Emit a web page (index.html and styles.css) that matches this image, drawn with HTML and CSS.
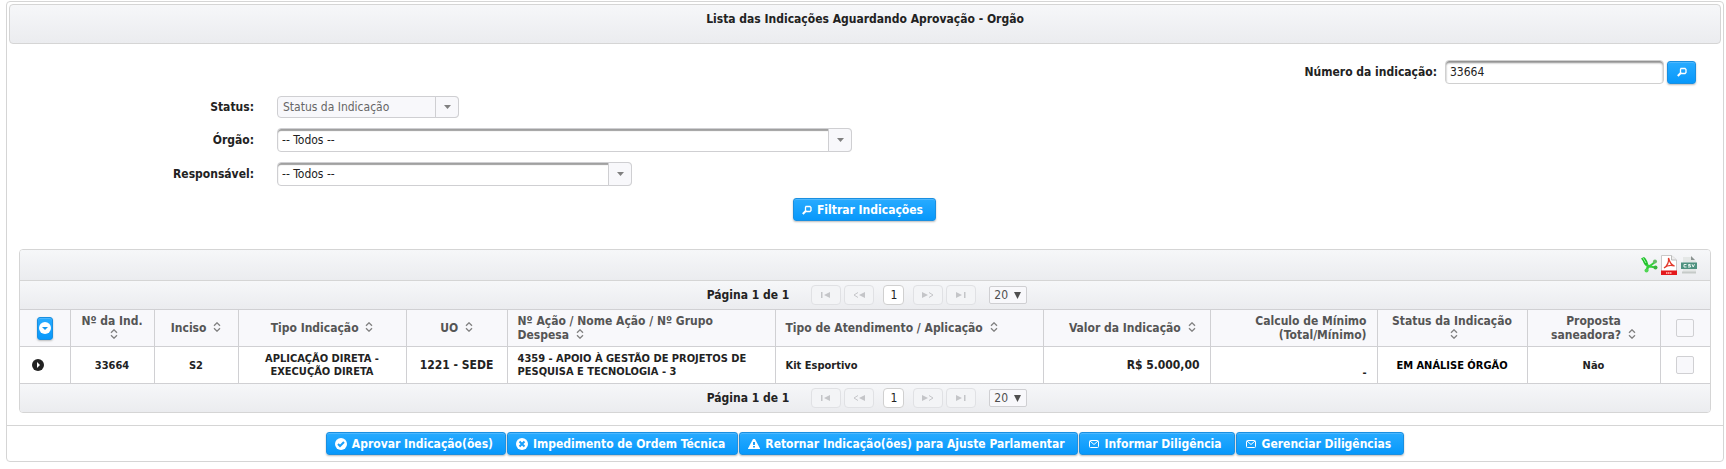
FILE: index.html
```
<!DOCTYPE html>
<html lang="pt-BR">
<head>
<meta charset="utf-8">
<title>Lista das Indicações</title>
<link rel="stylesheet" href="styles.css">
</head>
<body>
<svg class="defs" aria-hidden="true">
  <symbol id="search" viewBox="0 0 10 10"><path d="M4 1.500h4l1 1v3l-1 1H4.500l-1-1v-3z" fill="none" stroke="currentColor" stroke-width="1.300"/><path d="M4 5.800L.8 9" stroke="currentColor" stroke-width="2"/></symbol>
  <symbol id="check" viewBox="0 0 12 12"><circle cx="6" cy="6" r="6" fill="currentColor"/><path d="M3 6l2 2 4-4" fill="none" stroke="#1ba0fb" stroke-width="2"/></symbol>
  <symbol id="cross" viewBox="0 0 12 12"><circle cx="6" cy="6" r="6" fill="currentColor"/><path d="M3.500 3.500l5 5M8.500 3.500l-5 5" stroke="#1ba0fb" stroke-width="2"/></symbol>
  <symbol id="alert" viewBox="0 0 12 12"><path d="M5 1h2l5 9.500v.5H0v-.5z" fill="currentColor"/><path d="M5 4h2v3H5zM5 8h2v1.500H5z" fill="#1ba0fb"/></symbol>
  <symbol id="mail" viewBox="0 0 12 12"><rect x="1.500" y="2.500" width="9" height="7" rx="1" fill="none" stroke="currentColor"/><path d="M2 3l4 3.500L10 3" fill="none" stroke="currentColor"/></symbol>
  <symbol id="sort" viewBox="0 0 8 10"><path d="M1 3.800l3-3 3 3M1 6.200l3 3 3-3" fill="none" stroke="currentColor" stroke-width="1.300"/></symbol>
  <symbol id="caret" viewBox="0 0 7 4" preserveAspectRatio="none"><path d="M0 0h7L3.500 4z" fill="currentColor"/></symbol>
  <symbol id="first" viewBox="0 0 10 6"><path d="M0 0h1.500v6H0zM9 0v6L3 3z" fill="currentColor"/></symbol>
  <symbol id="prev" viewBox="0 0 12 6"><path d="M5 .5L1 3l4 2.500" fill="none" stroke="currentColor"/><path d="M12 0v6L6 3z" fill="currentColor"/></symbol>
  <symbol id="next" viewBox="0 0 12 6"><path d="M7 .5L11 3 7 5.500" fill="none" stroke="currentColor"/><path d="M0 0v6l6-3z" fill="currentColor"/></symbol>
  <symbol id="last" viewBox="0 0 10 6"><path d="M8 0h1.500v6H8zM0 0v6l6-3z" fill="currentColor"/></symbol>
</svg>

<main class="panel">
  <header class="panel-title">Lista das Indicações Aguardando Aprovação - Orgão</header>

  <form class="filters">
    <div class="number-row">
      <label for="numero">Número da indicação:</label>
      <input class="field" id="numero" type="text" value="33664">
      <button class="btn btn-icon" type="button" aria-label="Buscar"><svg class="i10"><use href="#search"/></svg></button>
    </div>
    <div class="filter-grid">
      <label for="status">Status:</label>
      <div class="select select-sm select-off"><select id="status" disabled><option>Status da Indicação</option></select><span class="trigger"><svg><use href="#caret"/></svg></span></div>
      <label for="orgao">Órgão:</label>
      <div class="select select-lg"><select id="orgao"><option>-- Todos --</option></select><span class="trigger"><svg><use href="#caret"/></svg></span></div>
      <label for="resp">Responsável:</label>
      <div class="select select-md"><select id="resp"><option>-- Todos --</option></select><span class="trigger"><svg><use href="#caret"/></svg></span></div>
    </div>
    <div class="submit-row"><button class="btn" type="button"><svg class="i10"><use href="#search"/></svg>Filtrar Indicações</button></div>
  </form>

  <section class="grid">
    <div class="bar exports">
      <a href="#" aria-label="Exportar XLS"><svg width="17" height="16" viewBox="0 0 17 16"><path d="M3 2c.5 4 2 7 6 7.500M6 13.500c0-3 1-4.500 4-4.500" fill="none" stroke="#35cf3b" stroke-width="2.600"/><path d="M0 1.500L3 0c2 1.500 3.500 4 4 7L4.500 8z" fill="#1fbf2c"/><path d="M2 1l3 5" stroke="#9af59a"/><path d="M9 9l5-4M9 9.500l5.500 1" stroke="#35cf3b" stroke-width="2"/><circle cx="5.500" cy="13.500" r="2" fill="#4fd653"/><circle cx="14" cy="4.500" r="2" fill="#66bd68"/><circle cx="14.500" cy="10.500" r="2" fill="#38b33d"/></svg></a>
      <a href="#" aria-label="Exportar PDF"><svg width="16" height="20" viewBox="0 0 16 20"><path d="M.5.500h10l5 4.500v14.500H.5z" fill="#fff" stroke="#c9c9c9"/><path d="M10.500.500V5h5" fill="#eee" stroke="#bbb"/><path d="M3 13c3-2 5-6 4.500-10C9 8 10.500 10.500 13.500 11 10 10 6 10.500 3 13z" fill="none" stroke="#e23b2e" stroke-width="1.300"/><path d="M0 15.500h16V20H0z" fill="#e3171b"/><path d="M5 18h6" stroke="#ff9a94" stroke-width="2" stroke-dasharray="1.500 .5"/></svg></a>
      <a href="#" aria-label="Exportar CSV"><svg width="18" height="18" viewBox="0 0 18 18"><path d="M3 1h9l4 4v12H3z" fill="#e4e7e6"/><path d="M11 0v4h4z" fill="#8b9391"/><path d="M2 15.500h14v2H2z" fill="#c5cac8"/><path d="M1 6.500h16V13H1z" fill="#4f9280"/><path d="M6.500 8.500H4v2.500h2.500M10.500 8.500H8.500v1.200h2V11h-2.500M12 8.200l1.200 2.800 1.300-2.800" fill="none" stroke="#e9f4ef"/></svg></a>
    </div>

    <nav class="bar pager" aria-label="Paginação superior">
      <span class="pager-text">Página 1 de 1</span>
      <button class="pg" disabled aria-label="Primeira"><svg width="10" height="6"><use href="#first"/></svg></button>
      <button class="pg" disabled aria-label="Anterior"><svg width="12" height="6"><use href="#prev"/></svg></button>
      <button class="pg pg-current" type="button">1</button>
      <button class="pg" disabled aria-label="Próxima"><svg width="12" height="6"><use href="#next"/></svg></button>
      <button class="pg" disabled aria-label="Última"><svg width="10" height="6"><use href="#last"/></svg></button>
      <span class="rows"><select aria-label="Linhas por página"><option>20</option></select><svg><use href="#caret"/></svg></span>
    </nav>

    <table>
      <colgroup><col class="w50"><col class="w84"><col class="w84"><col class="w168"><col class="w101"><col class="w268"><col class="w268"><col class="w167"><col class="w167"><col class="w150"><col class="w133"><col class="w50"></colgroup>
      <thead>
        <tr>
          <th><button class="btn btn-toggle" type="button" aria-label="Expandir todos"><svg width="12" height="12" viewBox="0 0 12 12"><circle cx="6" cy="6" r="6" fill="#fff"/><path d="M3 5h6L6 8z" fill="#1096f0"/></svg></button></th>
          <th>Nº da Ind. <svg class="sort"><use href="#sort"/></svg></th>
          <th>Inciso <svg class="sort"><use href="#sort"/></svg></th>
          <th>Tipo Indicação <svg class="sort"><use href="#sort"/></svg></th>
          <th>UO <svg class="sort"><use href="#sort"/></svg></th>
          <th class="left">Nº Ação / Nome Ação / Nº Grupo Despesa <svg class="sort"><use href="#sort"/></svg></th>
          <th class="left">Tipo de Atendimento / Aplicação <svg class="sort"><use href="#sort"/></svg></th>
          <th class="right wide">Valor da Indicação <svg class="sort"><use href="#sort"/></svg></th>
          <th class="right">Calculo de Mínimo (Total/Mínimo)</th>
          <th>Status da Indicação <svg class="sort"><use href="#sort"/></svg></th>
          <th>Proposta saneadora? <svg class="sort"><use href="#sort"/></svg></th>
          <th><input class="tick" type="checkbox" aria-label="Selecionar todos"></th>
        </tr>
      </thead>
      <tbody>
        <tr>
          <td class="expander"><button class="row-toggle" type="button" aria-label="Expandir"><svg width="12" height="12" viewBox="0 0 12 12"><circle cx="6" cy="6" r="6" fill="#222"/><path d="M5 3l3 3-3 3z" fill="#fff"/></svg></button></td>
          <td>33664</td>
          <td>S2</td>
          <td>APLICAÇÃO DIRETA - EXECUÇÃO DIRETA</td>
          <td class="big">1221 - SEDE</td>
          <td class="left">4359 - APOIO À GESTÃO DE PROJETOS DE PESQUISA E TECNOLOGIA - 3</td>
          <td class="left">Kit Esportivo</td>
          <td class="right big">R$ 5.000,00</td>
          <td class="right bottom">-</td>
          <td class="black">EM ANÁLISE ÓRGÃO</td>
          <td>Não</td>
          <td><input class="tick" type="checkbox" aria-label="Selecionar 33664"></td>
        </tr>
      </tbody>
    </table>

    <nav class="bar pager" aria-label="Paginação inferior">
      <span class="pager-text">Página 1 de 1</span>
      <button class="pg" disabled aria-label="Primeira"><svg width="10" height="6"><use href="#first"/></svg></button>
      <button class="pg" disabled aria-label="Anterior"><svg width="12" height="6"><use href="#prev"/></svg></button>
      <button class="pg pg-current" type="button">1</button>
      <button class="pg" disabled aria-label="Próxima"><svg width="12" height="6"><use href="#next"/></svg></button>
      <button class="pg" disabled aria-label="Última"><svg width="10" height="6"><use href="#last"/></svg></button>
      <span class="rows"><select aria-label="Linhas por página"><option>20</option></select><svg><use href="#caret"/></svg></span>
    </nav>
  </section>

  <footer class="actions">
    <button class="btn" type="button"><svg class="i12"><use href="#check"/></svg>Aprovar Indicação(ões)</button>
    <button class="btn" type="button"><svg class="i12"><use href="#cross"/></svg>Impedimento de Ordem Técnica</button>
    <button class="btn" type="button"><svg class="i12"><use href="#alert"/></svg>Retornar Indicação(ões) para Ajuste Parlamentar</button>
    <button class="btn" type="button"><svg class="i12"><use href="#mail"/></svg>Informar Diligência</button>
    <button class="btn" type="button"><svg class="i12"><use href="#mail"/></svg>Gerenciar Diligências</button>
  </footer>
</main>
</body>
</html>
```
FILE: styles.css
```
* { box-sizing: border-box; }

body {
  margin: 0;
  padding: 1px 2px 8px 6px;
  background: #fff;
  color: #222;
  font: 12px/14px "DejaVu Sans Condensed", "DejaVu Sans", sans-serif;
}

button, input, select { font: inherit; color: inherit; margin: 0; }
svg { display: block; }
.defs { position: absolute; width: 0; height: 0; }

.panel { border: 1px solid #d5d5d5; border-radius: 4px; padding: 2px 0 0; }

.panel-title {
  margin: 0 2px;
  padding: 7px 10px 17px;
  border: 1px solid #d5d5d5;
  border-radius: 4px;
  background: linear-gradient(#f6f7f9, #ebecef);
  font-weight: bold;
  text-align: center;
}

.filters { padding: 16px 27px 0 12px; }
.filters label { font-weight: bold; text-align: right; }
.number-row { display: flex; align-items: center; justify-content: flex-end; gap: 3px; }
.number-row label { margin-right: 5px; }

.field {
  width: 219px;
  height: 24px;
  padding: 0 4px;
  border: 1px solid #d0d0d0;
  border-radius: 4px;
  background: #fff;
  box-shadow: inset 0 2px 2px #8f8f8f;
}

.filter-grid {
  display: grid;
  grid-template-columns: 235px 1fr;
  column-gap: 23px;
  row-gap: 10px;
  align-items: center;
  margin-top: 12px;
}

.select { display: grid; grid-template-columns: 1fr 24px; height: 24px; }
.select select {
  grid-area: 1 / 1 / 2 / 3;
  appearance: none;
  width: 100%;
  padding: 0 28px 0 4px;
  border: 1px solid #cfcfd2;
  border-radius: 4px;
  background: #fff;
  box-shadow: inset 0 2px 1px #a0a0a0;
  opacity: 1;
}
.select .trigger {
  grid-area: 1 / 2 / 2 / 3;
  z-index: 1;
  display: grid;
  place-items: center;
  border: 1px solid #cfcfd2;
  border-radius: 0 4px 4px 0;
  background: #f8f8fb;
  color: #808080;
  pointer-events: none;
}
.select .trigger svg { width: 7px; height: 4px; }
.select-sm { width: 182px; height: 22px; }
.select-lg { width: 575px; }
.select-md { width: 355px; }
.select-off select { background: #f8f8fb; box-shadow: none; color: #666; padding-left: 5px; }

.submit-row { display: flex; justify-content: center; padding: 12px 0 0 14px; }

.btn {
  display: inline-flex;
  align-items: center;
  height: 23px;
  gap: 5px;
  padding: 0 12px 0 8px;
  border: 1px solid #1a8fe0;
  border-radius: 3px;
  background: linear-gradient(#28abff, #0798fb);
  box-shadow: inset 0 1px 0 #4db8ff, 0 1px 2px #bbb;
  color: #fff;
  font-weight: bold;
  white-space: nowrap;
}
.btn-icon { width: 29px; padding: 0; justify-content: center; }
.i10 { width: 10px; height: 10px; }
.i12 { width: 12px; height: 12px; }

.grid { margin: 28px 12px 12px; border: 1px solid #d5d5d5; border-radius: 4px; overflow: hidden; }
.bar { background: linear-gradient(#f6f7f9, #ebecef); }
.exports { display: flex; justify-content: flex-end; align-items: center; gap: 3px; height: 30px; padding-right: 12px; }

.pager {
  display: flex;
  align-items: center;
  justify-content: center;
  gap: 3px;
  height: 29px;
  padding-left: 4px;
  border-top: 1px solid #d5d5d5;
}
.pager-text { margin-right: 19px; font-weight: bold; }
.pg {
  display: grid;
  place-items: center;
  width: 30px;
  height: 20px;
  padding: 0;
  border: 1px solid #e0e1e4;
  border-radius: 4px;
  background: #f3f4f6;
  color: #c4c5c8;
}
.pg-current { width: 21px; margin: 0 6px; border-color: #d0d0d0; background: #fff; color: #222; }
.rows { display: grid; align-items: center; width: 38px; margin-left: 10px; color: #4f4f4f; }
.rows select {
  grid-area: 1 / 1;
  appearance: none;
  width: 100%;
  height: 18px;
  padding: 0 4px;
  border: 1px solid #cfcfd2;
  border-radius: 2px;
  background: #f8f8fb;
}
.rows svg { grid-area: 1 / 1; justify-self: end; width: 7px; height: 7px; margin-right: 6px; pointer-events: none; }

table { width: 100%; table-layout: fixed; border-collapse: collapse; }
.w50 { width: 50px; } .w84 { width: 84px; } .w101 { width: 101px; }
.w133 { width: 133px; } .w150 { width: 150px; } .w167 { width: 167px; } .w168 { width: 168px; } .w268 { width: 268px; }
th, td { height: 37px; padding: 4px 8px; border: 1px solid #d0d0d3; text-align: center; vertical-align: middle; font-weight: bold; }
th:first-child, td:first-child { border-left: 0; }
th:last-child, td:last-child { border-right: 0; }
th { background: #f8f8fb; color: #555; }
td { font-size: 11px; line-height: 13px; }
table .left { text-align: left; padding: 4px 10px; }
table .right { text-align: right; padding: 4px 10px; }
table .wide { padding-right: 14px; }
tbody .bottom { vertical-align: bottom; }
.big { font-size: 12px; }
.black { color: #000; }
.sort { display: inline-block; width: 8px; height: 10px; margin-left: 3px; color: #808080; }
.btn-toggle { width: 16px; padding: 0; justify-content: center; vertical-align: middle; }
tbody .expander { text-align: left; padding-left: 12px; }
.row-toggle { display: block; padding: 0; border: 0; background: none; }
.tick {
  appearance: none;
  display: block;
  width: 18px;
  height: 18px;
  margin: 0 auto;
  border: 1px solid #d0d0d3;
  border-radius: 2px;
  background: #f8f8fb;
}
table + .pager { height: 28px; border-top: 0; }

.actions { display: flex; flex-wrap: wrap; justify-content: center; gap: 1px; padding: 6px; border-top: 1px solid #d5d5d5; }
```
